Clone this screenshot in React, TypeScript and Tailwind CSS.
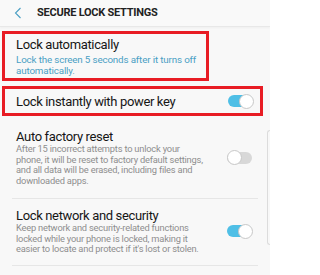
import React from "react";

function Toggle({ on }: { on: boolean }) {
  return (
    <div className="relative w-[26px] h-[15px] shrink-0 flex items-center">
      <div
        className={
          on
            ? "w-[25px] h-[12px] rounded-full bg-[#4fbfe6]"
            : "w-[25px] h-[12px] rounded-full bg-[#d8d8d8]"
        }
      />
      <div
        className={
          on
            ? "absolute right-0 top-0 w-[15px] h-[15px] rounded-full bg-white border border-[#c8c8c8]"
            : "absolute left-0 top-0 w-[15px] h-[15px] rounded-full bg-white border border-[#c8c8c8]"
        }
      />
    </div>
  );
}

function Lines({ lines }: { lines: string[] }) {
  return (
    <div className="text-[9.3px] leading-[10.7px] tracking-[-0.2px] text-[#8e8e8e] whitespace-nowrap">
      {lines.map((l, i) => (
        <div key={i}>{l}</div>
      ))}
    </div>
  );
}

export default function App() {
  return (
    <div
      className="relative w-[270px] h-[275px] overflow-hidden bg-[#f8f8f8] text-[#161616]"
      style={{ fontFamily: "Roboto, 'Liberation Sans', sans-serif" }}
    >
      <div className="h-[27px] flex items-center border-b border-[#e8e8e8] shadow-[0_1px_2px_rgba(0,0,0,0.04)] bg-[#f9f9f9]">
        <svg width="8" height="12" viewBox="0 0 8 12" className="ml-[14px]">
          <path d="M6.5 1 L1.5 6 L6.5 11" fill="none" stroke="#4a9fc4" strokeWidth="1.1" />
        </svg>
        <span className="ml-[15px] text-[11px] font-bold tracking-[-0.25px] text-[#222]">
          SECURE LOCK SETTINGS
        </span>
      </div>

      <div className="mt-[4px] ml-[2px] w-[207px] h-[50px] border-[3px] border-[#e81c24] pl-[11px] pt-[3px]">
        <div className="text-[13px] leading-[16px] tracking-[-0.35px]">Lock automatically</div>
        <div className="mt-[1px] text-[9.8px] leading-[11px] tracking-[-0.15px] text-[#4a9fc4] whitespace-nowrap">
          <div>Lock the screen 5 seconds after it turns off</div>
          <div>automatically.</div>
        </div>
      </div>

      <div className="mt-[5px] ml-[2px] w-[261px] h-[30px] border-[3px] border-[#e81c24] pl-[11px] pr-[6px] flex items-center justify-between">
        <div className="text-[13px] leading-[15px] tracking-[-0.35px]">Lock instantly with power key</div>
        <Toggle on />
      </div>

      <div className="mx-[12px] pt-[13px] pb-[11px] border-b border-[#e6e6e6] flex items-center justify-between">
        <div className="pl-[4px] w-[207px]">
          <div className="text-[13px] leading-[15px] tracking-[-0.35px]">Auto factory reset</div>
          <Lines
            lines={[
              "After 15 incorrect attempts to unlock your",
              "phone, it will be reset to factory default settings,",
              "and all data will be erased, including files and",
              "downloaded apps.",
            ]}
          />
        </div>
        <div className="mr-[5px]">
          <Toggle on={false} />
        </div>
      </div>

      <div className="mx-[12px] pt-[9px] pb-[10px] border-b border-[#e6e6e6] flex items-center justify-between">
        <div className="pl-[4px] w-[207px]">
          <div className="text-[13px] leading-[15px] tracking-[-0.35px]">Lock network and security</div>
          <Lines
            lines={[
              "Keep network and security-related functions",
              "locked while your phone is locked, making it",
              "easier to locate and protect if it's lost or stolen.",
            ]}
          />
        </div>
        <div className="mr-[5px]">
          <Toggle on />
        </div>
      </div>

      <div className="absolute right-0 top-[130px] w-[3px] h-[115px] border-l border-y border-[#dcdcdc] rounded-l-[3px]" />
    </div>
  );
}
